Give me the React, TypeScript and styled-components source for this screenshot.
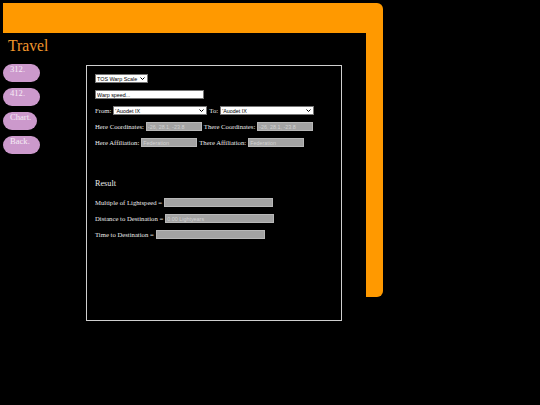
import React from "react";
import styled, { createGlobalStyle } from "styled-components";

/* palette */
const c = {
  orange: "#ff9900",
  title: "#f0962c",
  violet: "#cc99cc",
  violetText: "#f6ecf6",
  text: "#ececec",
  line: "#cfcfcf",
  muted: "#a3a3a3",
  mutedText: "#d2d2d2",
};

const Global = createGlobalStyle`
  html, body {
    margin: 0;
    background: #000;
  }
  body {
    min-height: 100vh;
    font-family: "Liberation Serif", "Times New Roman", serif;
  }
  #root {
    min-height: 100vh;
  }
`;

/* elbow layout: top bar across, rail on the right, content on the left */
const Page = styled.div`
  display: grid;
  grid-template-columns: 363px 17px;
  grid-template-rows: 30px auto;
  padding: 3px;
  width: max-content;
`;

const TopBar = styled.div`
  grid-column: 1 / 3;
  background: ${c.orange};
  border-radius: 0 6px 0 0;
`;

const Rail = styled.div`
  grid-column: 2;
  grid-row: 2;
  align-self: start;
  height: 264px;
  background: ${c.orange};
  border-radius: 0 0 6px 0;
`;

const Content = styled.main`
  grid-column: 1;
  grid-row: 2;
`;

const Title = styled.h1`
  margin: 0;
  padding: 4px 0 0 5px;
  font-size: 15.7px;
  line-height: 18px;
  font-weight: normal;
  color: ${c.title};
`;

const Body = styled.div`
  display: grid;
  grid-template-columns: 83px 256px;
  margin-top: 9px;
`;

const Sidebar = styled.nav`
  display: flex;
  flex-direction: column;
  align-items: flex-start;
  gap: 6px;
`;

const NavButton = styled.button<{ $w: number }>`
  box-sizing: border-box;
  width: ${(p) => p.$w}px;
  height: 18px;
  border: none;
  border-radius: 9px;
  background: ${c.violet};
  color: ${c.violetText};
  font-family: "Liberation Serif", serif;
  font-size: 8.6px;
  line-height: 10px;
  text-align: left;
  padding: 0 0 0 7px;
  display: flex;
  align-items: flex-start;
  cursor: pointer;
`;

const Panel = styled.section`
  box-sizing: border-box;
  width: 256px;
  height: 256px;
  margin-top: 1px;
  border: 1px solid ${c.line};
  padding: 8px;
  display: flex;
  flex-direction: column;
  color: ${c.text};
  font-size: 6.7px;
`;

const Row = styled.div`
  display: flex;
  align-items: center;
  gap: 2px;
  height: 9px;
  margin-bottom: 7px;
  white-space: nowrap;
`;

const Label = styled.label`
  line-height: 9px;
`;

const Input = styled.input<{ $w: number; $muted?: boolean }>`
  box-sizing: border-box;
  width: ${(p) => p.$w}px;
  height: 9px;
  margin: 0;
  padding: 0 1px;
  border: 1px solid ${(p) => (p.$muted ? "#b8b8b8" : "#767676")};
  background: ${(p) => (p.$muted ? c.muted : "#fff")};
  color: ${(p) => (p.$muted ? c.mutedText : "#000")};
  font-family: "Liberation Sans", Arial, sans-serif;
  font-size: 5.4px;
  outline: none;
`;

const SelectBox = styled.div<{ $w: number }>`
  position: relative;
  box-sizing: border-box;
  width: ${(p) => p.$w}px;
  height: 9px;
  border: 1px solid #767676;
  background: #fff;
`;

const Select = styled.select`
  appearance: none;
  box-sizing: border-box;
  width: 100%;
  height: 100%;
  margin: 0;
  padding: 0 0 0 1px;
  border: none;
  background: transparent;
  color: #000;
  font-family: "Liberation Sans", Arial, sans-serif;
  font-size: 5.4px;
  line-height: 7px;
  outline: none;
`;

const Chevron = styled.svg`
  position: absolute;
  right: 2px;
  top: 2px;
  width: 5px;
  height: 3px;
  pointer-events: none;
`;

const ResultTitle = styled.h3`
  margin: 25px 0 10px;
  font-size: 8.2px;
  font-weight: normal;
  line-height: 9.4px;
`;

const Dropdown: React.FC<{ w: number; value: string }> = ({ w, value }) => (
  <SelectBox $w={w}>
    <Select defaultValue={value}>
      <option>{value}</option>
    </Select>
    <Chevron viewBox="0 0 5 3">
      <polyline points="0.5,0.5 2.5,2.5 4.5,0.5" fill="none" stroke="#000" strokeWidth="1" />
    </Chevron>
  </SelectBox>
);

const navs = [
  { label: "312.", w: 37 },
  { label: "412.", w: 37 },
  { label: "Chart.", w: 34 },
  { label: "Back.", w: 37 },
];

const App: React.FC = () => {
  const coords = "-26, 28.1, -23.8";
  const planet = "'Auodet IX";

  return (
    <>
      <Global />
      <Page>
        <TopBar />
        <Rail />
        <Content>
          <Title>Travel</Title>
          <Body>
            <Sidebar>
              {navs.map((n) => (
                <NavButton key={n.label} $w={n.w}>
                  {n.label}
                </NavButton>
              ))}
            </Sidebar>

            <Panel>
              <Row>
                <Dropdown w={53} value="TOS Warp Scale" />
              </Row>
              <Row>
                <Input $w={109} defaultValue="Warp speed..." />
              </Row>
              <Row>
                <Label>From:</Label>
                <Dropdown w={94} value={planet} />
                <Label>To:</Label>
                <Dropdown w={94} value={planet} />
              </Row>
              <Row>
                <Label>Here Coordinates:</Label>
                <Input $w={56} $muted disabled value={coords} readOnly />
                <Label>There Coordinates:</Label>
                <Input $w={56} $muted disabled value={coords} readOnly />
              </Row>
              <Row>
                <Label>Here Affiliation:</Label>
                <Input $w={56} $muted disabled value="Federation" readOnly />
                <Label>There Affiliation:</Label>
                <Input $w={56} $muted disabled value="Federation" readOnly />
              </Row>

              <ResultTitle>Result</ResultTitle>
              <Row>
                <Label>Multiple of Lightspeed =</Label>
                <Input $w={109} $muted disabled value="" readOnly />
              </Row>
              <Row>
                <Label>Distance to Destination =</Label>
                <Input $w={109} $muted disabled value="0.00 Lightyears" readOnly />
              </Row>
              <Row>
                <Label>Time to Destination =</Label>
                <Input $w={109} $muted disabled value="" readOnly />
              </Row>
            </Panel>
          </Body>
        </Content>
      </Page>
    </>
  );
};

export default App;
